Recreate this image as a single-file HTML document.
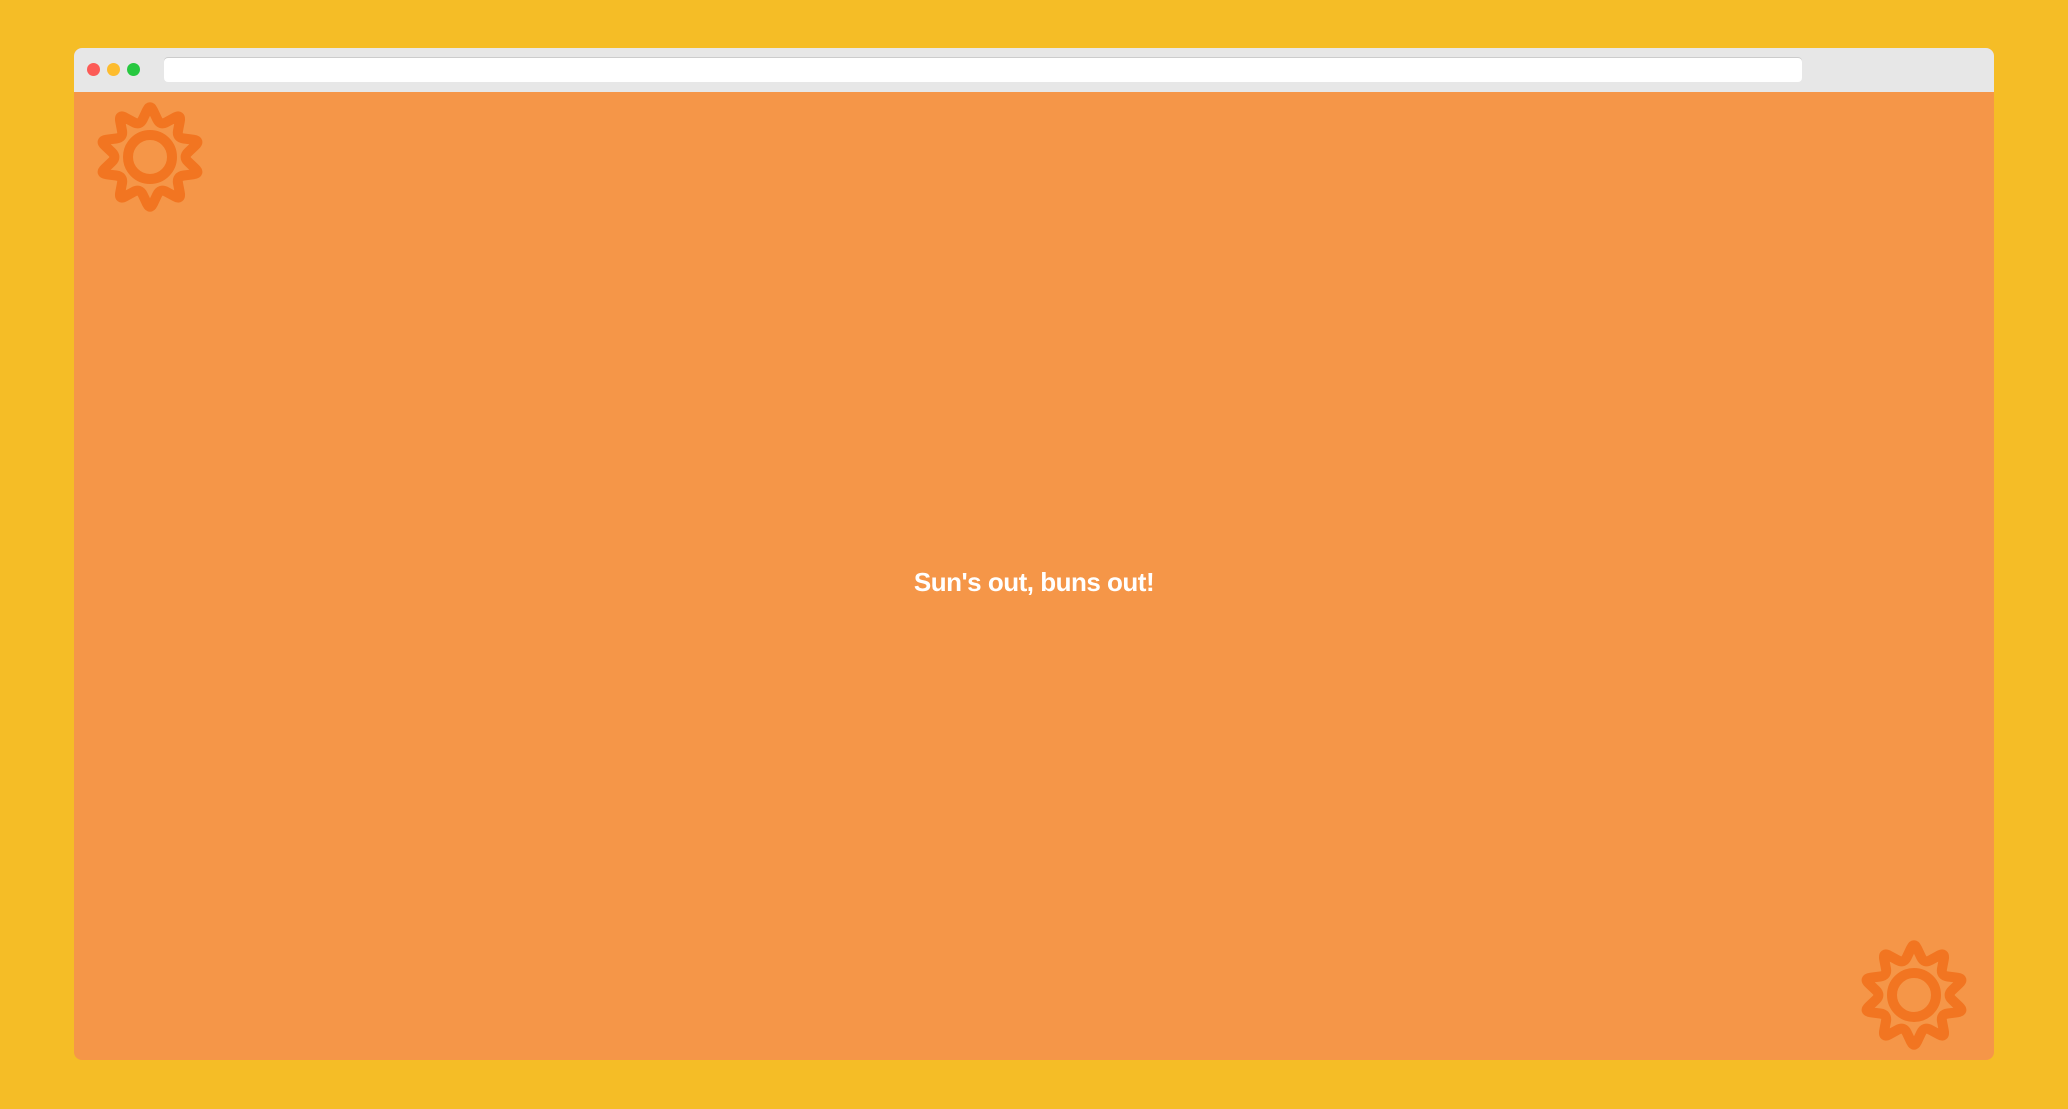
<!DOCTYPE html>
<html><head><style>
html,body{margin:0;padding:0;width:2068px;height:1109px;background:#f5bd26;overflow:hidden;font-family:"Liberation Sans",sans-serif}
.win{position:absolute;left:74px;top:48px;width:1920px;height:1012px;border-radius:8px;overflow:hidden;background:#f59648}
.bar{position:absolute;left:0;top:0;width:100%;height:44px;background:#e7e7e7}
.dot{position:absolute;top:15px;width:13px;height:13px;border-radius:50%}
.url{position:absolute;left:90px;top:10px;width:1638px;height:24px;background:#fff;border-radius:4px;box-shadow:0 -1px 0 #ccc}
.txt{position:absolute;left:0;width:100%;top:519px;text-align:center;color:#fff;font-weight:bold;font-size:26px;letter-spacing:-0.5px}
svg{position:absolute}
</style></head><body>
<div class="win">
<div class="bar">
<div class="dot" style="left:13px;background:#fc5b57"></div>
<div class="dot" style="left:33px;background:#fdbc2e"></div>
<div class="dot" style="left:53px;background:#27c840"></div>
<div class="url"></div>
</div>
<div class="txt">Sun's out, buns out!</div>
</div>
<svg width="2068" height="1109" style="left:0;top:0">
<defs>
<g id="sun" fill="none" stroke="#f27521" stroke-width="10" stroke-linejoin="round">
<circle cx="0" cy="0" r="22"/>
<path id="star" d=""/>
</g>
</defs>
<use href="#sun" transform="translate(150,157)"/>
<use href="#sun" transform="translate(1914,995)"/>
</svg>
<script>
(function(){
var R=53,r=33,k=0.3,pts=[];
for(var i=0;i<20;i++){var a=(-90+18*i)*Math.PI/180,rad=i%2?r:R;pts.push([rad*Math.cos(a),rad*Math.sin(a)]);}
function lerp(p,q,t){return [p[0]+(q[0]-p[0])*t,p[1]+(q[1]-p[1])*t];}
function f(p){return p[0].toFixed(2)+","+p[1].toFixed(2);}
var d="";
for(var i=0;i<20;i++){var c=pts[i],p=pts[(i+19)%20],n=pts[(i+1)%20];
var a=lerp(c,p,k),b=lerp(c,n,k);
d+=(i?" L":"M")+f(a)+" Q"+f(c)+" "+f(b);}
document.getElementById("star").setAttribute("d",d+"Z");
})();
</script>
</body></html>
